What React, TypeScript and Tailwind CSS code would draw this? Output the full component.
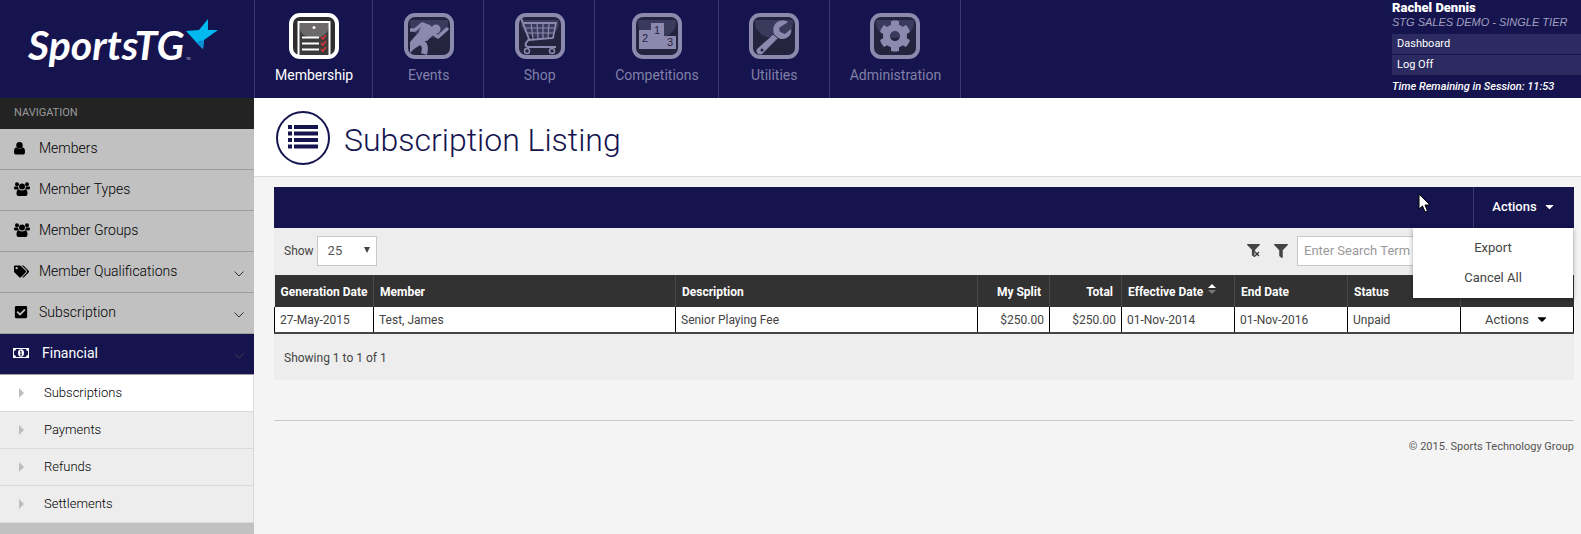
import type { ReactNode } from 'react';
import { FaCaretDown, FaCheckSquare, FaCog, FaFilter, FaTags } from 'react-icons/fa';

interface Tab {
  label: string;
  art: ReactNode;
  active?: boolean;
}

interface NavItem {
  label: string;
  icon: ReactNode;
  expandable?: boolean;
}

/* Artwork inside the 50x46 tiles */

const ChecklistArt = () => (
  <g>
    <rect x="9.500" y="9" width="31" height="36" fill="#3d3b3b" />
    <path d="M10 10h30v3a15 12 0 0 1-30 0z" fill="#6b6969" />
    <path d="M9.500 43V9H40.500V43" fill="none" stroke="#fff" strokeWidth="2" />
    <circle cx="25" cy="14.500" r="1.500" fill="#fff" />
    <path d="M13 24.500h17M13 30.500h17M13 36.500h17" stroke="#fff" strokeWidth="2" />
    <path d="M32 24l1.800 2 3.200-4M32 30l1.800 2 3.200-4M32 36l1.800 2 3.200-4" fill="none" stroke="#e0343c" strokeWidth="1.500" />
  </g>
);

const RunnerArt = () => (
  <g fill="none" stroke="#8b89ae" strokeLinejoin="round">
    <path d="M6 17h5l7-6 8 3" strokeWidth="3.500" />
    <path d="M30 21l4 3 9-8" strokeWidth="3.500" strokeLinecap="round" />
    <path d="M18 11l9 2 5 6-9 9H9l5-7z" fill="#8b89ae" stroke="none" />
    <circle cx="32" cy="16" r="4.500" fill="#8b89ae" stroke="none" />
    <path d="M14 20l11 3-6 7-9 6-4 4V29z" fill="#8b89ae" stroke="none" />
    <path d="M15 29c6 1 7 5 5 12" strokeWidth="6" />
  </g>
);

const CartArt = () => (
  <g fill="none" stroke="#8b89ae">
    <path d="M6 5l8 21-3 4c-1 2 0 4 2 4h28" strokeWidth="2" />
    <path d="M9 10h32l-3 15-24 2" strokeWidth="1.800" />
    <path d="M11 15h29M12 20h27M16 10l2 16M22 10l1 16M28 10v16M34 10l-1 15" strokeWidth="1.200" />
    <circle cx="12" cy="38" r="2.500" strokeWidth="1.500" />
    <circle cx="37" cy="38" r="2.500" strokeWidth="1.500" />
  </g>
);

const PodiumArt = () => (
  <g>
    <path d="M7 17h12v-7h13v13h12v13H7z" fill="#8b89ae" />
    <g fill="#24243f" fontFamily="Liberation Sans, sans-serif" fontSize="11">
      <text x="22" y="21">1</text>
      <text x="10" y="29">2</text>
      <text x="35" y="33">3</text>
    </g>
  </g>
);

const WrenchArt = () => (
  <g>
    <path
      d="M39 9c-5-3-12-1-14 4-1 3-1 5 0 8L8 36c-2 3 2 7 5 5l16-16c4 2 9 1 12-3 1-2 2-4 1-6l-6 5-5-2-1-4z"
      fill="#8b89ae"
    />
    <path d="M24 21l6 5" stroke="#24243f" />
    <circle cx="13" cy="37" r="1.500" fill="#24243f" />
  </g>
);

const GearArt = () => (
  <g transform="translate(9 7)">
    <FaCog size={32} color="#8b89ae" />
  </g>
);

/* Sidebar glyphs */

const PersonIcon = () => (
  <svg width="12" height="13" viewBox="0 0 12 13" aria-hidden="true">
    <circle cx="5.500" cy="3.200" r="3.200" />
    <path d="M2.500 5.500c2 1.600 4 1.600 6 0 2 0 2.500 2 2.500 4.500 0 2-1 2.500-2 2.500H2c-1 0-2-.5-2-2.500 0-2.500.5-4.500 2.500-4.500z" />
  </svg>
);

const GroupIcon = () => (
  <svg width="16" height="14" viewBox="0 0 16 14" aria-hidden="true">
    <circle cx="3" cy="2.200" r="2" />
    <circle cx="13" cy="2.200" r="2" />
    <circle cx="8" cy="4.500" r="3" />
    <path d="M1 4.500h3.200c0 1.500.3 2 1 3H2C.5 7.500 0 7 0 6s.2-1.500 1-1.500zM15 4.500h-3.200c0 1.500-.3 2-1 3H14c1.500 0 2-.5 2-1.500s-.2-1.500-1-1.500z" />
    <path d="M5 7.500c2 1.300 4 1.300 6 0 1.800 0 2.500 1.500 2.500 4 0 1.700-.8 2.500-2 2.500h-7c-1.200 0-2-.8-2-2.500 0-2.500.7-4 2.500-4z" />
  </svg>
);

const tabs: Tab[] = [
  { label: 'Membership', art: <ChecklistArt />, active: true },
  { label: 'Events', art: <RunnerArt /> },
  { label: 'Shop', art: <CartArt /> },
  { label: 'Competitions', art: <PodiumArt /> },
  { label: 'Utilities', art: <WrenchArt /> },
  { label: 'Administration', art: <GearArt /> },
];

const navItems: NavItem[] = [
  { label: 'Members', icon: <PersonIcon /> },
  { label: 'Member Types', icon: <GroupIcon /> },
  { label: 'Member Groups', icon: <GroupIcon /> },
  { label: 'Member Qualifications', icon: <FaTags size={15} />, expandable: true },
  { label: 'Subscription', icon: <FaCheckSquare size={14} />, expandable: true },
];

const financialItems = ['Subscriptions', 'Payments', 'Refunds', 'Settlements'];

const columns = [
  { title: 'Generation Date', value: '27-May-2015', width: 'w-[99px]' },
  { title: 'Member', value: 'Test, James', width: '' },
  { title: 'Description', value: 'Senior Playing Fee', width: '' },
  { title: 'My Split', value: '$250.00', width: 'w-[72px]', right: true },
  { title: 'Total', value: '$250.00', width: 'w-[72px]', right: true },
  { title: 'Effective Date', value: '01-Nov-2014', width: 'w-[113px]', sorted: true },
  { title: 'End Date', value: '01-Nov-2016', width: 'w-[113px]' },
  { title: 'Status', value: 'Unpaid', width: 'w-[113px]' },
];

function TabTile({ art, active }: { art: ReactNode; active?: boolean }) {
  return (
    <svg width="50" height="46" viewBox="0 0 50 46" aria-hidden="true">
      <rect x="2" y="2" width="46" height="42" rx="9" fill={active ? '#2f2d2d' : '#24243f'} />
      {!active && <path d="M6 7h38v3a19 15 0 0 1-38 0z" fill="#3a3a5c" />}
      {art}
      <rect x="2" y="2" width="46" height="42" rx="9" fill="none" stroke={active ? '#fff' : '#8b89ae'} strokeWidth="4" />
    </svg>
  );
}

function Chevron({ className }: { className: string }) {
  return (
    <svg width="10" height="6" viewBox="0 0 10 6" className={className} aria-hidden="true">
      <path d="M.5.5L5 5 9.500.5" fill="none" stroke="currentColor" />
    </svg>
  );
}

function Logo() {
  return (
    <svg width="254" height="98" viewBox="0 0 254 98" role="img" aria-label="SportsTG">
      <text x="28" y="60" fill="#fff" fontFamily="Lato, sans-serif" fontSize="41" fontWeight="700" fontStyle="italic">
        SportsTG
      </text>
      <path d="M186 31l13-1 9-11v11h10l-14 10-1 9-7-7z" fill="#00b9ee" />
      <path d="M196 42l8-2-1 9z" fill="#0a8fd6" />
      <text x="186" y="60" fill="#c8c8dc" fontFamily="Roboto, sans-serif" fontSize="3">TM</text>
    </svg>
  );
}

function Header() {
  return (
    <header className="flex h-[98px] bg-[#15144f]">
      <a href="#home" className="w-[254px] shrink-0">
        <Logo />
      </a>
      <nav className="flex border-l border-[#3b3a70]">
        {tabs.map((tab) => (
          <a
            key={tab.label}
            href="#tab"
            className={`flex min-w-[111px] flex-col items-center border-r border-[#3b3a70] pt-[13px] pr-[19px] pl-5 text-sm ${
              tab.active ? 'text-white' : 'text-[#8180a6]'
            }`}
          >
            <TabTile art={tab.art} active={tab.active} />
            <span className="mt-1.5 leading-5">{tab.label}</span>
          </a>
        ))}
      </nav>
      <div className="ml-auto w-[189px] text-white">
        <p className="text-[13px] leading-4 font-black">Rachel Dennis</p>
        <p className="mb-[5px] font-['Liberation_Sans',sans-serif] text-[11px] leading-[13px] text-[#a09fbd] italic">
          STG SALES DEMO - SINGLE TIER
        </p>
        <ul className="space-y-px text-[11px] leading-5">
          <li className="bg-[#2c2b61] px-[5px]">
            <a href="#dashboard">Dashboard</a>
          </li>
          <li className="bg-[#2c2b61] px-[5px]">
            <a href="#logoff">Log Off</a>
          </li>
        </ul>
        <p className="text-[11px] leading-6 font-medium italic">Time Remaining in Session: 11:53</p>
      </div>
    </header>
  );
}

function Sidebar() {
  return (
    <aside className="w-[254px] shrink-0 bg-[#c1c1c1]">
      <h2 className="h-[31px] bg-[#232323] pl-3.5 text-[11px] leading-[30px] text-[#999]">NAVIGATION</h2>
      <ul>
        {navItems.map((item) => (
          <li key={item.label} className="border-b border-[#9e9e9e]">
            <a href="#nav" className="flex h-10 items-center pr-2.5 pb-0.5 pl-3.5 text-sm font-light text-black">
              <span className="w-[25px]">{item.icon}</span>
              {item.label}
              {item.expandable && <Chevron className="mt-1.5 ml-auto text-[#333]" />}
            </a>
          </li>
        ))}
        <li>
          <a
            href="#financial"
            className="flex h-[41px] items-center border-b border-[#9e9e9e] bg-[#15144f] pr-2.5 pb-0.5 pl-[13px] text-sm text-white"
          >
            <svg width="16" height="10" viewBox="0 0 16 10" className="mr-[13px]" aria-hidden="true">
              <path d="M0 0h16v10H0z" fill="#fff" />
              <path d="M3 1h10a2 2 0 0 0 2 2v4a2 2 0 0 0-2 2H3a2 2 0 0 0-2-2V3a2 2 0 0 0 2-2z" fill="#15144f" />
              <ellipse cx="8" cy="5" rx="3" ry="3.700" fill="#fff" />
              <path d="M7 3.500l1-.5v4M7 7h2" fill="none" stroke="#15144f" />
            </svg>
            Financial
            <Chevron className="mt-1.5 ml-auto text-[#3a3a48]" />
          </a>
          <ul className="border-r border-[#dadada]">
            {financialItems.map((label, i) => (
              <li key={label} className={`border-b border-[#dadada] ${i === 0 ? 'bg-white' : 'bg-[#ededed]'}`}>
                <a href="#sub" className="flex h-9 items-center pl-[19px] text-[13px] font-light text-black">
                  <span className="mr-5 border-y-[5px] border-l-[5px] border-y-transparent border-l-[#bdbdbd]" />
                  {label}
                </a>
              </li>
            ))}
          </ul>
        </li>
      </ul>
    </aside>
  );
}

function Toolbar() {
  return (
    <div className="flex h-[47px] items-center px-2.5 pb-0.5 text-xs text-[#444]">
      <label htmlFor="page-size">Show</label>
      <div className="relative ml-[3px]">
        <select
          id="page-size"
          className="h-[30px] w-[60px] appearance-none border border-[#c8c8c8] bg-white pl-2.5 text-[13px] text-[#555]"
        >
          <option>25</option>
        </select>
        <span className="pointer-events-none absolute top-[11px] right-[7px] border-x-[3px] border-t-[6px] border-x-transparent border-t-[#444]" />
      </div>
      <button type="button" aria-label="Clear filter" className="relative ml-auto">
        <FaFilter size={13} />
        <svg width="6" height="6" viewBox="0 0 6 6" className="absolute right-0 bottom-0" aria-hidden="true">
          <path d="M1 1l4 4M5 1L1 5" stroke="#ededed" strokeWidth="3" />
          <path d="M1 1l4 4M5 1L1 5" stroke="#333" strokeWidth="1.300" />
        </svg>
      </button>
      <button type="button" aria-label="Filter" className="ml-3.5">
        <FaFilter size={14} />
      </button>
      <input
        type="text"
        aria-label="Search"
        placeholder="Enter Search Term"
        className="ml-[9px] h-[30px] w-[267px] border border-[#c8c8c8] bg-white px-1.5 text-[13px] placeholder:text-[#999]"
      />
    </div>
  );
}

function ListingTable() {
  return (
    <table className="w-full table-fixed border-collapse text-left text-xs">
      <thead>
        <tr className="h-8 bg-[#323232] text-white">
          {columns.map((col) => (
            <th
              key={col.title}
              className={`${col.width} border-r border-[#484848] pt-0.5 pl-1.5 font-bold whitespace-nowrap ${
                col.right ? 'pr-2 text-right' : ''
              }`}
            >
              {col.title}
              {col.sorted && (
                <span className="ml-[5px] inline-flex flex-col gap-0.5 align-top">
                  <span className="border-x-4 border-b-4 border-x-transparent border-b-white" />
                  <span className="border-x-4 border-t-4 border-x-transparent border-t-[#777]" />
                </span>
              )}
            </th>
          ))}
          <th aria-label="Row actions" className="w-[113px]" />
        </tr>
      </thead>
      <tbody>
        <tr className="h-[26px] border-b-2 border-b-[#444] bg-white text-[#444]">
          {columns.map((col) => (
            <td key={col.title} className={`border-x border-x-black px-[5px] ${col.right ? 'text-right' : ''}`}>
              {col.value}
            </td>
          ))}
          <td className="border-x border-x-black text-center">
            <button type="button" className="inline-flex items-center gap-1.5 text-[13px]">
              Actions
              <FaCaretDown size={14} className="text-black" />
            </button>
          </td>
        </tr>
      </tbody>
    </table>
  );
}

export default function App() {
  return (
    <div className="relative flex min-h-screen flex-col overflow-hidden bg-[#f4f4f4] font-[Roboto,sans-serif]">
      <Header />
      <div className="flex flex-1">
        <Sidebar />
        <main className="min-w-0 flex-1">
          <div className="flex h-[79px] items-center gap-3.5 border-b border-[#dcdcdc] bg-white pt-px pl-[22px]">
            <svg width="54" height="54" viewBox="0 0 54 54" aria-hidden="true">
              <circle cx="27" cy="27" r="26" fill="none" stroke="#15144f" strokeWidth="2" />
              <path
                d="M12 14h4v4h-4zM18 14h24v4H18zM12 20.500h4v4h-4zM18 20.500h24v4H18zM12 27h4v4h-4zM18 27h24v4H18zM12 33.500h4v4h-4zM18 33.500h24v4H18z"
                fill="#15144f"
              />
            </svg>
            <h1 className="pt-1 text-[32px] leading-10 font-light text-[#15144f]">Subscription Listing</h1>
          </div>

          <div className="mt-2.5 mr-[7px] ml-5">
            <section className="bg-[#ededed]">
              <div className="relative flex h-[41px] justify-end bg-[#15144f]">
                <button
                  type="button"
                  className="flex w-[101px] items-center justify-center gap-1.5 border-l border-[#3b3a70] pb-0.5 text-[13px] font-medium text-white"
                >
                  Actions
                  <FaCaretDown size={13} />
                </button>
                <ul className="absolute top-full right-px z-10 w-[160px] bg-white py-[5px] text-center text-[13px] leading-[30px] text-[#444] shadow-[0_1px_5px_rgba(0,0,0,0.35)]">
                  <li>
                    <a href="#export">Export</a>
                  </li>
                  <li>
                    <a href="#cancel">Cancel All</a>
                  </li>
                </ul>
                {/* Mouse pointer */}
                <svg width="13" height="20" viewBox="0 0 13 20" className="absolute top-1.5 right-[143px]" aria-hidden="true">
                  <path d="M1 1v15l3.500-3 2.500 6 2.500-1-2.500-6H12z" fill="#fff" stroke="#000" />
                </svg>
              </div>
              <Toolbar />
              <ListingTable />
              <p className="px-2.5 pt-4 pb-[14px] text-xs text-[#444]">Showing 1 to 1 of 1</p>
            </section>
            <footer className="mt-10 border-t border-[#c8c8c8] pt-[18px] text-right text-[11px] leading-4 text-[#555]">
              © 2015. Sports Technology Group
            </footer>
          </div>
        </main>
      </div>
    </div>
  );
}
